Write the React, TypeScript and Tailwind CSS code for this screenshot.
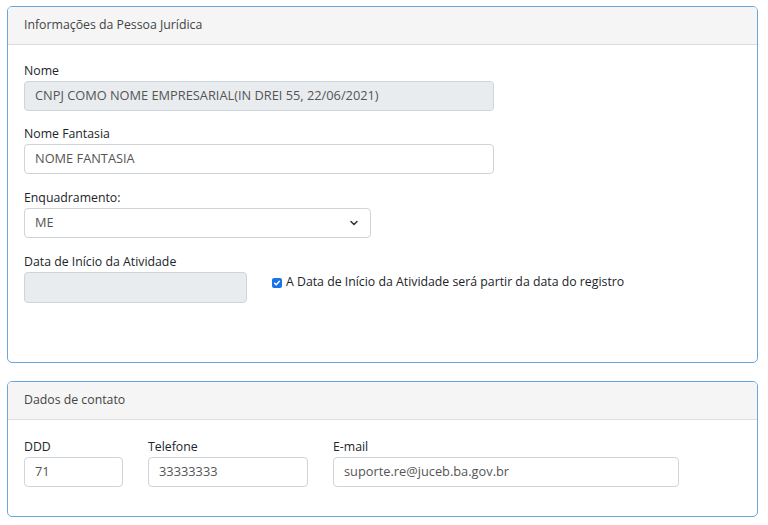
import { ChevronDown } from 'lucide-react';

function Label({ children }: { children: React.ReactNode }) {
  return <div className="text-[12.3px] leading-[16px] text-[#212529] mb-[2px]">{children}</div>;
}

function Field({ value, disabled, className }: { value?: string; disabled?: boolean; className: string }) {
  return (
    <div
      className={`h-[30px] rounded-[4px] border border-[#ced4da] px-[10px] flex items-center text-[12.8px] text-[#555] ${disabled ? 'bg-[#e9ecef]' : 'bg-white'} ${className}`}
    >
      {value}
    </div>
  );
}

function Card({ title, children, className }: { title: string; children: React.ReactNode; className: string }) {
  return (
    <div className={`ml-[7px] w-[751px] rounded-[5px] border-[1.5px] border-[#6aa6dc] bg-white overflow-hidden ${className}`}>
      <div className="h-[38px] bg-[#f5f5f5] border-b border-[#dcdcdc] px-[16px] flex items-center text-[12.3px] text-[#444]">
        {title}
      </div>
      {children}
    </div>
  );
}

export default function App() {
  return (
    <div className="w-[768px] h-[525px] bg-white pt-[6px] font-['Open_Sans',sans-serif]">
      <Card title="Informações da Pessoa Jurídica" className="h-[357px]">
        <div className="px-[16px] pt-[18px]">
          <Label>Nome</Label>
          <Field value="CNPJ COMO NOME EMPRESARIAL(IN DREI 55, 22/06/2021)" disabled className="w-[470px]" />

          <div className="mt-[15px]">
            <Label>Nome Fantasia</Label>
            <Field value="NOME FANTASIA" className="w-[470px]" />
          </div>

          <div className="mt-[16px]">
            <Label>Enquadramento:</Label>
            <div className="w-[347px] h-[30px] rounded-[4px] border border-[#ced4da] bg-white px-[10px] flex items-center justify-between text-[12.8px] text-[#555]">
              <span>ME</span>
              <ChevronDown size={12} strokeWidth={3.2} className="text-[#343a40]" />
            </div>
          </div>

          <div className="mt-[16px]">
            <Label>Data de Início da Atividade</Label>
            <div className="flex items-center gap-[25px]">
              <Field disabled className="w-[223px] h-[31px]" />
              <label className="flex items-center gap-[4px] text-[12.3px] text-[#212529] -mt-[10px]">
                <span className="w-[10px] h-[10px] rounded-[2px] bg-[#1a73e8] flex items-center justify-center">
                  <svg width="8" height="8" viewBox="0 0 10 10" fill="none">
                    <path d="M2 5.2l2 2 4-4.4" stroke="white" strokeWidth="1.8" strokeLinecap="round" strokeLinejoin="round" />
                  </svg>
                </span>
                A Data de Início da Atividade será partir da data do registro
              </label>
            </div>
          </div>
        </div>
      </Card>

      <Card title="Dados de contato" className="mt-[18px] h-[136px]">
        <div className="px-[16px] pt-[19px] flex gap-[25px]">
          <div>
            <Label>DDD</Label>
            <Field value="71" className="w-[99px]" />
          </div>
          <div>
            <Label>Telefone</Label>
            <Field value="33333333" className="w-[160px]" />
          </div>
          <div>
            <Label>E-mail</Label>
            <Field value="suporte.re@juceb.ba.gov.br" className="w-[346px]" />
          </div>
        </div>
      </Card>
    </div>
  );
}
